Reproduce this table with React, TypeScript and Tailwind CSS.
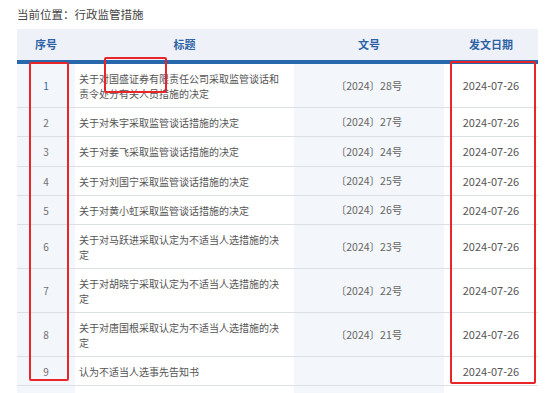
import React from "react";

type Row = { n: number; t: string; w: string; h: number };

const rows: Row[] = [
  { n: 1, t: "关于对国盛证券有限责任公司采取监管谈话和责令处分有关人员措施的决定", w: "〔2024〕28号", h: 44 },
  { n: 2, t: "关于对朱宇采取监管谈话措施的决定", w: "〔2024〕27号", h: 29 },
  { n: 3, t: "关于对姜飞采取监管谈话措施的决定", w: "〔2024〕24号", h: 30 },
  { n: 4, t: "关于对刘国宁采取监管谈话措施的决定", w: "〔2024〕25号", h: 29 },
  { n: 5, t: "关于对黄小虹采取监管谈话措施的决定", w: "〔2024〕26号", h: 29 },
  { n: 6, t: "关于对马跃进采取认定为不适当人选措施的决定", w: "〔2024〕23号", h: 44 },
  { n: 7, t: "关于对胡晓宁采取认定为不适当人选措施的决定", w: "〔2024〕22号", h: 44 },
  { n: 8, t: "关于对唐国根采取认定为不适当人选措施的决定", w: "〔2024〕21号", h: 44 },
  { n: 9, t: "认为不适当人选事先告知书", w: "", h: 29 },
];

export default function App() {
  return (
    <div
      className="relative w-[550px] h-[393px] overflow-hidden bg-white"
      style={{ fontFamily: '"Noto Sans CJK SC", "Noto Sans", sans-serif' }}
    >
      <div className="pl-[17px]">
        <div className="h-[29px] flex items-center text-[11.5px] text-[#444]">
          当前位置：行政监管措施
        </div>
        <div className="w-[521px]">
          <div className="grid grid-cols-[58px_219px_150px_94px] h-[31px] bg-[#eef2f8] text-[11px] font-bold text-[#2d62a6]">
            <div className="flex items-center justify-center">序号</div>
            <div className="flex items-center justify-center">标题</div>
            <div className="flex items-center justify-center">文号</div>
            <div className="flex items-center justify-center">发文日期</div>
          </div>
          <div className="h-[4px] bg-[#2767ab]" />
          {rows.map((r) => (
            <div
              key={r.n}
              className="grid grid-cols-[58px_219px_150px_94px] border-b border-[#dcdfe3] text-[10px]"
              style={{ height: r.h }}
            >
              <div
                className={
                  r.n === 1
                    ? "flex items-center justify-center bg-[#f3f6fa] text-[#3a6aa8]"
                    : "flex items-center justify-center bg-[#f3f6fa] text-[#707070]"
                }
              >
                {r.n}
              </div>
              <div className="flex items-center pl-[4px]">
                <div className="w-[205px] leading-[15px] text-[#555]">{r.t}</div>
              </div>
              <div className="flex items-center justify-center bg-[#f3f6fa] text-[10.5px] text-[#666]">{r.w}</div>
              <div className="flex items-center justify-center text-[11px] text-[#555]">2024-07-26</div>
            </div>
          ))}
          <div className="grid grid-cols-[58px_219px_150px_94px] h-[29px]">
            <div className="bg-[#f3f6fa]" />
            <div />
            <div className="bg-[#f3f6fa]" />
            <div />
          </div>
        </div>
      </div>

      <div className="absolute left-[29px] top-[62px] w-[40px] h-[319px] border-2 border-[#e8262a] rounded-[2px]" />
      <div className="absolute left-[104px] top-[57px] w-[63px] h-[36px] border-2 border-[#e8262a] rounded-[2px]" />
      <div className="absolute left-[450px] top-[61px] w-[86px] h-[323px] border-2 border-[#e8262a] rounded-[2px]" />
    </div>
  );
}
